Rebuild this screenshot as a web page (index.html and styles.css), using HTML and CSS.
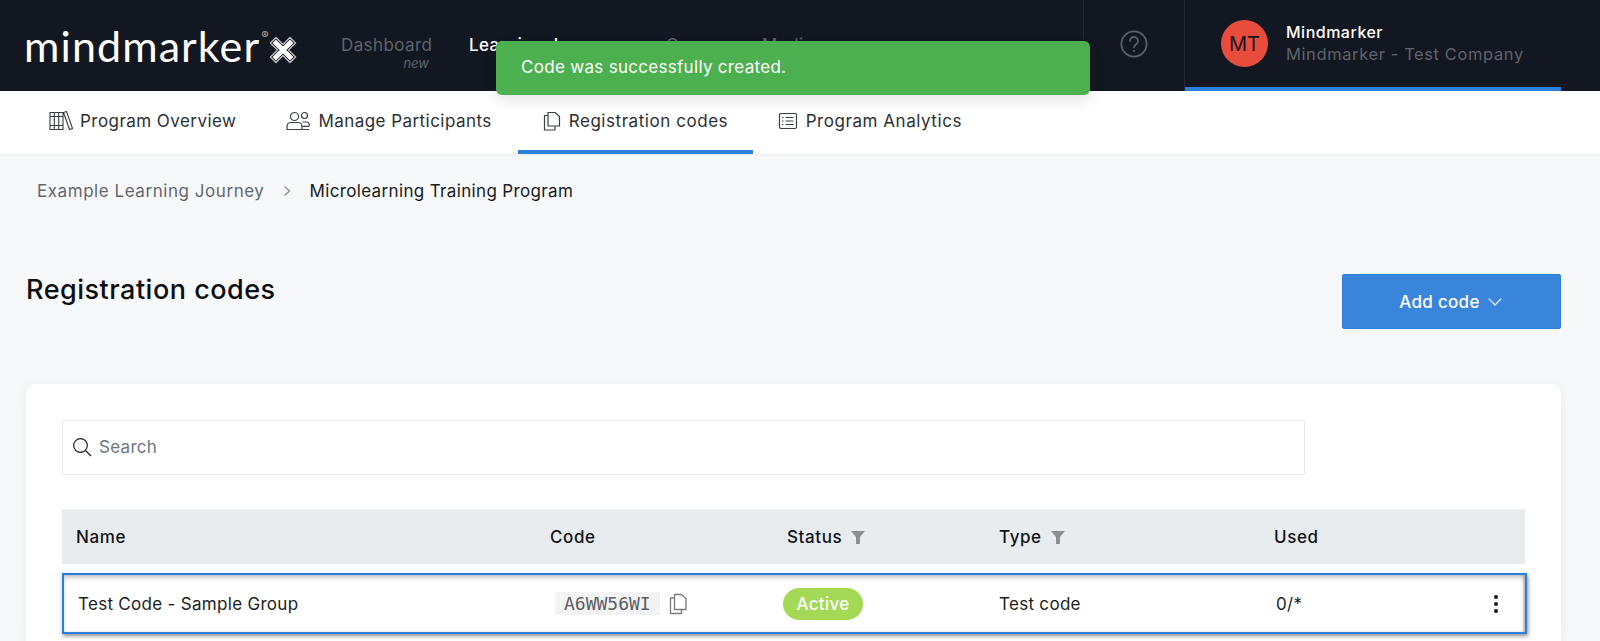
FILE: index.html
```html
<!DOCTYPE html>
<html lang="en">
<head>
<meta charset="utf-8">
<title>Registration codes</title>
<link rel="stylesheet" href="styles.css">
</head>
<body>
<header class="topbar">
  <div class="logo">
    <span class="logo-word">mindmarker</span><span class="logo-reg">®</span>
    <svg class="logo-x" viewBox="0 0 28 28" width="28" height="28" aria-hidden="true">
      <path d="M7 1.500 14 8.500 21 1.500 26.500 7 19.500 14 26.500 21 21 26.500 14 19.500 7 26.500 1.500 21 8.500 14 1.500 7Z" fill="#16181f" stroke="#b9bbbf" stroke-width="1.500" stroke-linejoin="round"/>
      <path d="M7 4.500 14 11.500 21 4.500 23.500 7 16.500 14 23.500 21 21 23.500 14 16.500 7 23.500 4.500 21 11.500 14 4.500 7Z" fill="#fff" stroke="#fff" stroke-width="1.200" stroke-linejoin="round"/>
    </svg>
  </div>
  <nav class="mainnav">
    <a class="mainnav-item dash"><span>Dashboard</span><em>new</em></a>
    <a class="mainnav-item learn"><span>Learning Journeys</span></a>
    <a class="mainnav-item groups"><span>Groups</span></a>
    <a class="mainnav-item"><span>Media</span></a>
  </nav>
  <div class="help">
    <svg viewBox="0 0 28 28" width="28" height="28" fill="none" stroke="#5d626b" stroke-width="1.700" aria-hidden="true">
      <circle cx="14" cy="14" r="12.600"/>
      <path d="M10 11a4 4 0 1 1 6.200 3.300c-1.400.9-2.200 1.600-2.200 3.200" stroke-linecap="round"/>
      <circle cx="14" cy="21" r="1" fill="#5d626b" stroke="none"/>
    </svg>
  </div>
  <div class="user">
    <div class="avatar">MT</div>
    <div class="user-text">
      <div class="user-name">Mindmarker</div>
      <div class="user-company">Mindmarker - Test Company</div>
    </div>
  </div>
</header>
<div class="toast">Code was successfully created.</div>

<nav class="subnav">
  <a class="tab tab-one">
    <svg viewBox="0 0 24 20" width="24" height="20" fill="none" stroke="#3a3f47" stroke-width="1.100" aria-hidden="true">
      <path d="M1 1.500h13v17h-13zM5.300 1.500v17M9.700 1.500v17M1 5.500h13M1 14.500h13M14.500 1.500l3-1 6 17-3 1z"/>
    </svg>
    <span>Program Overview</span>
  </a>
  <a class="tab tab-two">
    <svg viewBox="0 0 24 20" width="24" height="20" fill="none" stroke="#3a3f47" stroke-width="1.200" aria-hidden="true">
      <circle cx="8.500" cy="5.500" r="4"/>
      <path d="M1 18.500v-3c0-2.500 2-4 4-4h7c2 0 4 1.500 4 4v3z"/>
      <circle cx="18.500" cy="4.500" r="3"/>
      <path d="M16.500 11h4c1.800 0 2.800 1.300 2.800 3 0 .8-.4 1.300-1.200 1.300h-5.800M16.500 18.500h6.500"/>
    </svg>
    <span>Manage Participants</span>
  </a>
  <a class="tab tab-active">
    <svg viewBox="0 0 18 20" width="18" height="20" fill="none" stroke="#3a3f47" stroke-width="1.200" stroke-linejoin="round" aria-hidden="true">
      <path d="M5 1.500h7l4.500 4v9.500h-11.500z"/>
      <path d="M5 4.500H1.500V19h10.500v-4"/>
    </svg>
    <span>Registration codes</span>
  </a>
  <a class="tab tab-four">
    <svg viewBox="0 0 20 20" width="20" height="20" fill="none" stroke="#3a3f47" stroke-width="1.200" aria-hidden="true">
      <rect x="1.500" y="2.500" width="17" height="15" rx="1.500"/>
      <path d="M7.500 6.500h8M7.500 10h8M7.500 13.500h8M4 6.500h1.500M4 10h1.500M4 13.500h1.500"/>
    </svg>
    <span>Program Analytics</span>
  </a>
</nav>

<main class="page">
  <div class="crumbs">
    <a class="crumb-link">Example Learning Journey</a>
    <svg class="crumb-sep" viewBox="0 0 8 12" width="8" height="12" fill="none" stroke="#8a8f96" stroke-width="1.300" aria-hidden="true"><path d="M1.500 1.500 6.500 6l-5 4.500"/></svg>
    <span class="crumb-current">Microlearning Training Program</span>
  </div>

  <div class="title-row">
    <h1>Registration codes</h1>
    <button class="add-btn" type="button">
      <span>Add code</span>
      <svg viewBox="0 0 14 8" width="14" height="8" fill="none" stroke="#fff" stroke-width="1.100" aria-hidden="true"><path d="M.7.700 7 7l6.300-6.300"/></svg>
    </button>
  </div>

  <section class="card">
    <div class="search">
      <svg viewBox="0 0 20 20" width="20" height="20" fill="none" stroke="#1c1f24" stroke-width="1.200" aria-hidden="true"><circle cx="8.500" cy="8.500" r="6.800"/><path d="m13.500 13.500 5.500 5.500"/></svg>
      <span>Search</span>
    </div>

    <div class="table-head cols">
      <div>Name</div>
      <div>Code</div>
      <div class="filter-cell">Status
        <svg viewBox="0 0 14 14" width="14" height="14" aria-hidden="true"><path d="M0 1h14L9 7v7H5V7z" fill="#8b8e92"/></svg>
      </div>
      <div class="filter-cell">Type
        <svg viewBox="0 0 14 14" width="14" height="14" aria-hidden="true"><path d="M0 1h14L9 7v7H5V7z" fill="#8b8e92"/></svg>
      </div>
      <div>Used</div>
      <div></div>
    </div>

    <div class="table-row cols">
      <div>Test Code - Sample Group</div>
      <div class="code-cell">
        <code class="code">A6WW56WI</code>
        <svg viewBox="0 0 18 22" width="18" height="22" fill="none" stroke="#77797d" stroke-width="1.300" stroke-linejoin="round" aria-hidden="true">
          <path d="M5.500 1.500h7l4.500 4v11h-11.500z"/>
          <path d="M5.500 5H1.500v15.500h11V16.500"/>
        </svg>
      </div>
      <div><span class="pill">Active</span></div>
      <div>Test code</div>
      <div>0/*</div>
      <div class="menu-cell"><span class="dots"><i></i><i></i><i></i></span></div>
    </div>
  </section>
</main>
</body>
</html>
```
FILE: styles.css
```css
* { box-sizing: border-box; }

html, body {
  margin: 0;
  height: 641px;
  overflow: hidden;
}

body {
  position: relative;
  background: #f7f8fa;
  color: #171a20;
  font-family: Inter, "Liberation Sans", sans-serif;
  font-size: 17px;
  letter-spacing: 0.3px;
}

.topbar {
  display: flex;
  align-items: stretch;
  height: 91px;
  background: #131722;
  padding-right: 39px;
}

.logo {
  display: flex;
  align-items: flex-start;
  width: 341px;
  padding: 21px 0 0 24px;
  color: #fff;
  letter-spacing: 0;
}

.logo-word {
  font-family: Lato, sans-serif;
  font-size: 43px;
  line-height: 50px;
  letter-spacing: 1.1px;
}

.logo-reg {
  margin: 7px 0 0 1px;
  font-size: 11px;
  color: #a9abaf;
}

.logo-x {
  margin: 15px 0 0 0;
}

.mainnav {
  display: flex;
  flex: 1;
  padding-top: 35px;
  font-size: 17px;
  color: #5f636b;
  letter-spacing: 0.4px;
}

.mainnav-item {
  display: flex;
  flex-direction: column;
  margin-right: 37px;
}

.mainnav-item span { line-height: 20px; white-space: nowrap; }

.mainnav-item em {
  align-self: flex-end;
  margin: 0 3px 0 0;
  font-size: 13px;
  line-height: 16px;
  color: #5f636b;
  letter-spacing: 0;
}

.dash { width: 91px; }

.learn {
  width: 160px;
  color: #fff;
  font-weight: 500;
}

.groups { width: 59px; }

.help {
  display: flex;
  align-items: center;
  justify-content: center;
  width: 102px;
  border-left: 1px solid #242833;
  border-right: 1px solid #242833;
  padding-bottom: 3px;
}

.user {
  display: flex;
  align-items: center;
  width: 376px;
  padding: 0 0 0 36px;
  border-bottom: 4px solid #2b7fdd;
  gap: 18px;
}

.avatar {
  display: flex;
  align-items: center;
  justify-content: center;
  width: 47px;
  height: 47px;
  border-radius: 50%;
  background: #e74c3c;
  color: #131722;
  font-size: 20px;
  letter-spacing: 0;
}

.user-name {
  color: #fff;
  font-size: 16px;
  font-weight: 500;
  line-height: 21px;
  letter-spacing: 0.5px;
}

.user-company {
  color: #5f636b;
  font-size: 16.500px;
  line-height: 22px;
  letter-spacing: 0.6px;
}

.toast {
  position: absolute;
  left: 496px;
  top: 41px;
  width: 594px;
  height: 54px;
  padding-left: 25px;
  border-radius: 6px;
  background: #4caf50;
  color: #fff;
  font-size: 17px;
  line-height: 53px;
  letter-spacing: 0.3px;
  box-shadow: 0 6px 14px rgba(0, 0, 0, 0.1);
}

.subnav {
  display: flex;
  height: 63px;
  background: #fff;
  padding-left: 49px;
  box-shadow: 0 1px 3px rgba(0, 0, 0, 0.06);
  color: #2b2f36;
  font-size: 17px;
  letter-spacing: 0.45px;
}

.tab {
  display: flex;
  align-items: center;
  gap: 7px;
  padding-top: 1px;
  border-bottom: 4px solid transparent;
}

.tab-one { margin-right: 50px; }
.tab-two { margin-right: 26px; gap: 8px; }
.tab-active {
  width: 235px;
  padding-left: 25px;
  border-bottom-color: #2b7fdd;
  gap: 8px;
  letter-spacing: 0.55px;
}
.tab-four { margin-left: 25px; gap: 8px; letter-spacing: 0.55px; }

.page {
  padding: 0 39px 0 26px;
}

.crumbs {
  display: flex;
  align-items: center;
  height: 24px;
  margin: 25px 0 0 11px;
  font-size: 17px;
  letter-spacing: 0.55px;
}

.crumb-link { color: #62676f; }
.crumb-sep { margin: 0 18px 0 19px; }
.crumb-current { letter-spacing: 0.35px; }

.title-row {
  display: flex;
  justify-content: space-between;
  align-items: flex-start;
  margin-top: 71px;
}

h1 {
  margin: -4px 0 0;
  font-size: 27px;
  font-weight: 500;
  line-height: 40px;
  letter-spacing: 0.5px;
  color: #0c0f14;
}

.add-btn {
  display: flex;
  align-items: center;
  justify-content: center;
  gap: 8px;
  width: 219px;
  height: 55px;
  padding: 0 2px 0 0;
  border: 1px solid #2b7fdd;
  border-radius: 2px;
  background: #3a85dc;
  color: #fff;
  font: 500 17px Inter, sans-serif;
  letter-spacing: 0.3px;
}

.card {
  height: 257px;
  margin-top: 55px;
  padding: 36px;
  border-radius: 10px 10px 0 0;
  background: #fff;
  box-shadow: 0 2px 12px rgba(0, 0, 0, 0.06);
}

.search {
  display: flex;
  align-items: center;
  gap: 7px;
  width: 1243px;
  height: 55px;
  padding: 0 0 2px 9px;
  border: 1px solid #e8eaed;
  border-radius: 2px;
  color: #6e7682;
  font-size: 17px;
}

.cols {
  display: grid;
  align-items: center;
}

.table-head {
  grid-template-columns: 474px 237px 212px 275px 1fr 0;
  height: 55px;
  margin-top: 34px;
  padding-left: 14px;
  background: #e9ecef;
  font-weight: 500;
  letter-spacing: 0.6px;
  color: #111319;
}

.filter-cell {
  display: flex;
  align-items: center;
  gap: 9px;
}

.table-row {
  grid-template-columns: 472px 237px 212px 277px 1fr 42px;
  height: 61px;
  width: 1465px;
  margin-top: 9px;
  padding-left: 14px;
  border: 2px solid #2b7fdd;
  background: #fff;
  box-shadow: 1px 2px 4px rgba(0, 0, 0, 0.45), inset 0 3px 4px rgba(0, 0, 0, 0.2), inset -2px 0 2px rgba(0, 0, 0, 0.2);
  color: #1b1e24;
}

.code-cell {
  display: flex;
  align-items: center;
  gap: 9px;
  padding-left: 5px;
}

.code {
  padding: 0 9px;
  height: 23px;
  background: #f3f3f4;
  color: #5c5f66;
  font-family: "DejaVu Sans Mono", monospace;
  font-size: 18px;
  font-weight: 500;
  line-height: 23px;
  letter-spacing: 0;
}

.pill {
  display: inline-block;
  width: 80px;
  height: 32px;
  margin-left: -4px;
  border-radius: 16px;
  background: #a3d955;
  color: #fff;
  font-size: 17px;
  font-weight: 500;
  line-height: 32px;
  text-align: center;
}

.menu-cell {
  display: flex;
  justify-content: flex-end;
  padding-right: 27px;
}

.dots {
  display: flex;
  flex-direction: column;
  gap: 3px;
}

.dots i {
  display: block;
  width: 4px;
  height: 4px;
  border-radius: 50%;
  background: #16181d;
}
```
